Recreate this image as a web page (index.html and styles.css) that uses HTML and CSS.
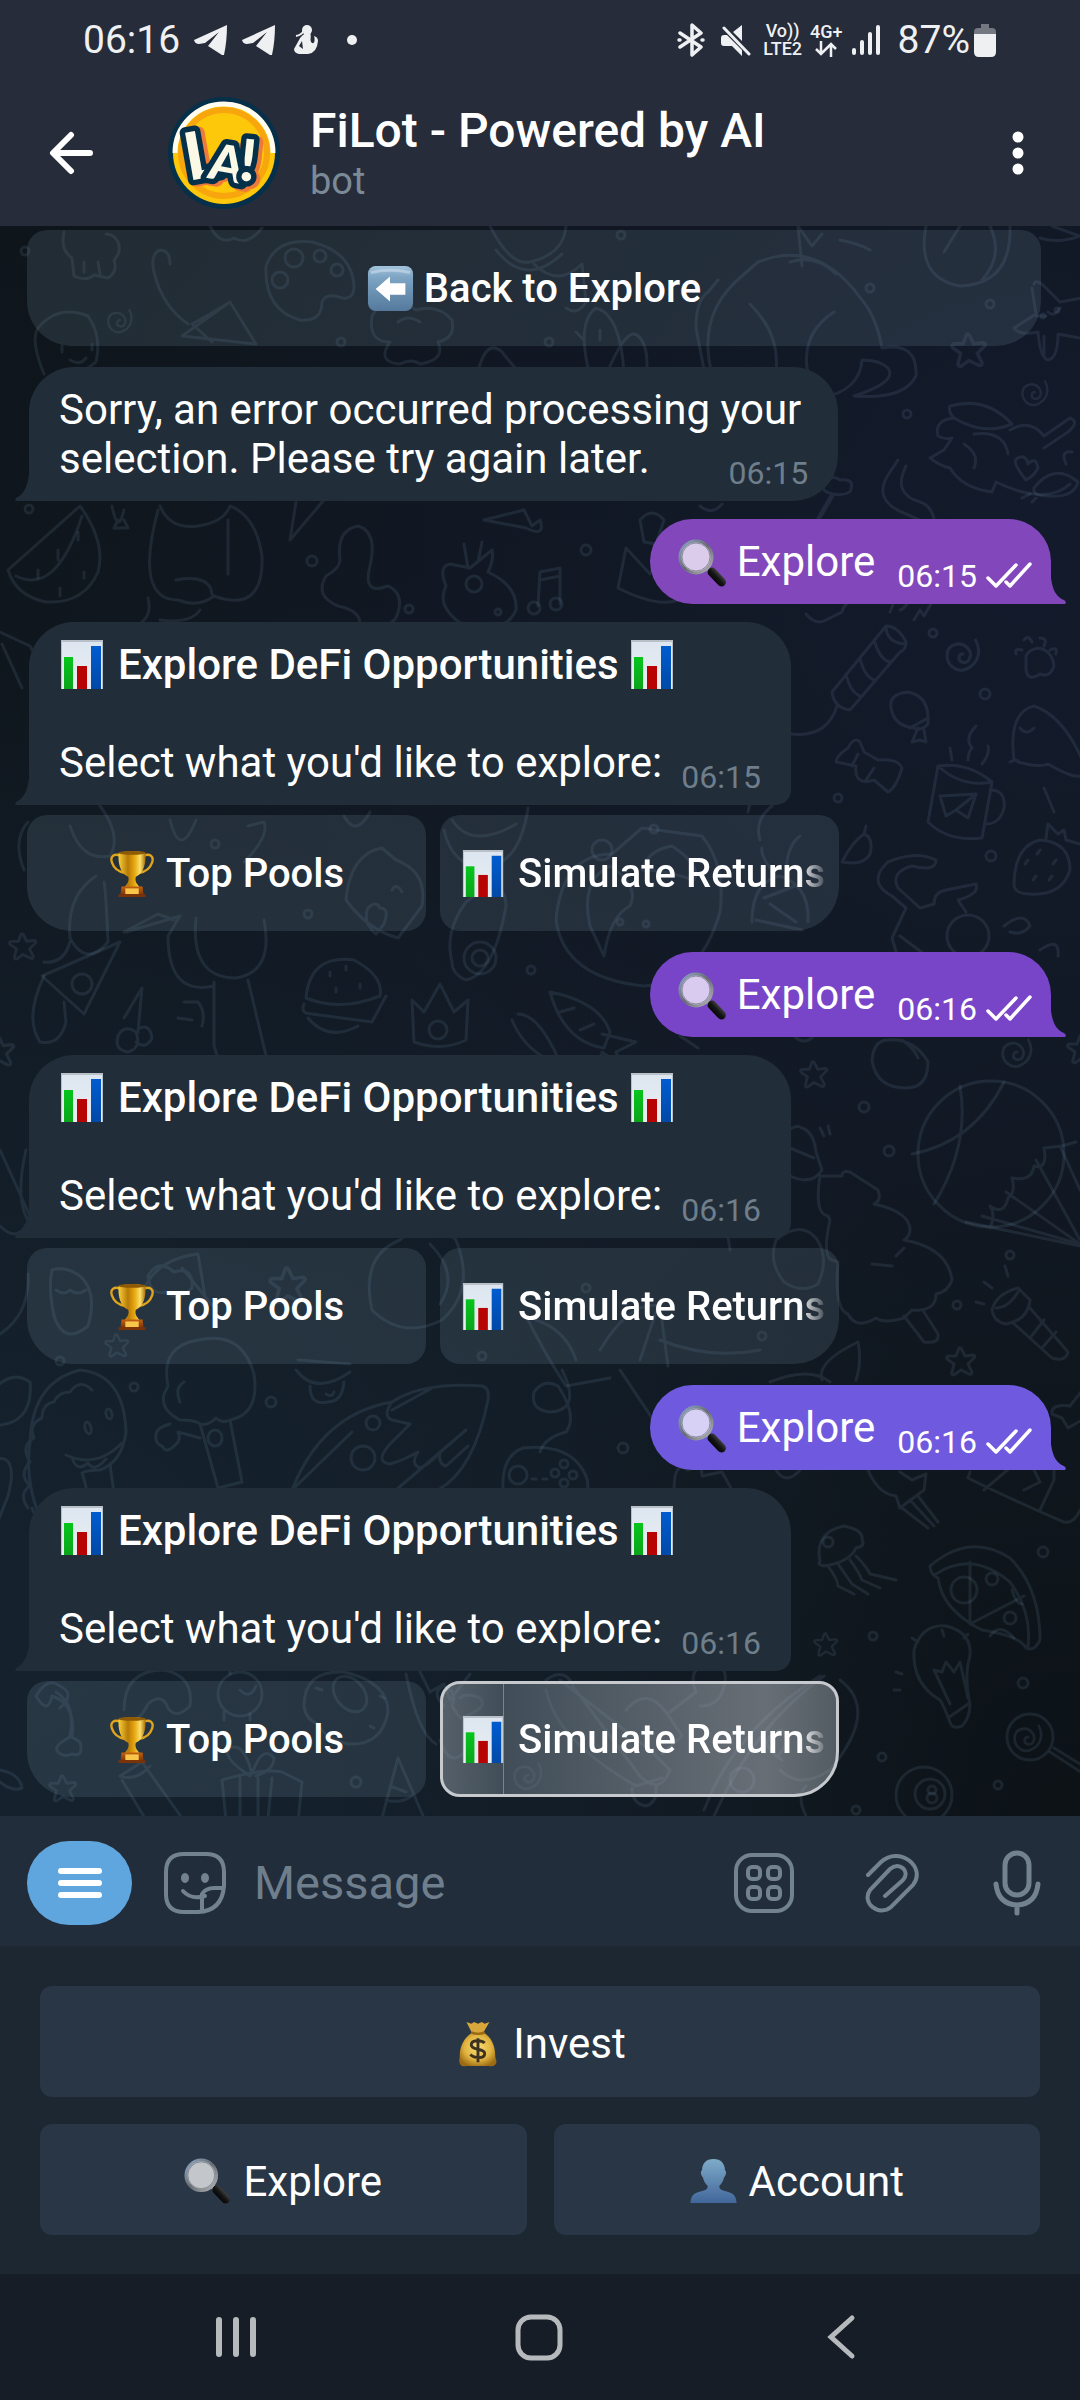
FILE: index.html
```html
<!DOCTYPE html>
<html lang="en">
<head>
<meta charset="utf-8">
<meta name="viewport" content="width=device-width, initial-scale=1">
<title>FiLot - Powered by AI</title>
<link rel="stylesheet" href="styles.css">
</head>
<body>
<svg class="defs" aria-hidden="true">
  <defs>
    <linearGradient id="gold" x1="0" x2="1" y1="0" y2="0"><stop offset="0" stop-color="#f8cf3a"/><stop offset=".35" stop-color="#b87a06"/><stop offset=".6" stop-color="#e8a912"/><stop offset=".8" stop-color="#fbe06a"/><stop offset="1" stop-color="#a76a05"/></linearGradient>
    <linearGradient id="wood" x1="0" x2="0" y1="0" y2="1"><stop offset="0" stop-color="#c4610f"/><stop offset="1" stop-color="#7a3208"/></linearGradient>
    <linearGradient id="paper" x1="0" x2="0" y1="0" y2="1"><stop offset="0" stop-color="#dde6f0"/><stop offset="1" stop-color="#e9edf2"/></linearGradient>
    <linearGradient id="green" x1="0" x2="0" y1="0" y2="1"><stop offset="0" stop-color="#06c51c"/><stop offset="1" stop-color="#0aa51a"/></linearGradient>
    <linearGradient id="blue" x1="0" x2="0" y1="0" y2="1"><stop offset="0" stop-color="#005ccf"/><stop offset="1" stop-color="#0049a8"/></linearGradient>
    <linearGradient id="person" x1="0" x2="0" y1="0" y2="1"><stop offset="0" stop-color="#7fabc9"/><stop offset="1" stop-color="#41669a"/></linearGradient>
    <linearGradient id="key" x1="0" x2="0" y1="0" y2="1"><stop offset="0" stop-color="#a3c3dc"/><stop offset=".25" stop-color="#7ea5c4"/><stop offset="1" stop-color="#54799c"/></linearGradient>
    <linearGradient id="rim" x1="0" x2="1" y1="0" y2="1"><stop offset="0" stop-color="#8fa9c8"/><stop offset=".5" stop-color="#666c72"/><stop offset="1" stop-color="#b5b8bb"/></linearGradient>
    <linearGradient id="grip" x1="0" x2="1" y1="1" y2="0"><stop offset="0" stop-color="#000"/><stop offset=".5" stop-color="#151515"/><stop offset="1" stop-color="#555"/></linearGradient>
    <radialGradient id="sack" cx=".5" cy=".45" r=".6"><stop offset="0" stop-color="#f7dc74"/><stop offset=".6" stop-color="#e2b440"/><stop offset="1" stop-color="#9c6a12"/></radialGradient>
    <symbol id="e-chart" viewBox="0 0 49 49">
      <path fill="#b9c0c8" d="M2 0h42v49H2z"/><path fill="url(#paper)" d="M3 2h40v47H3z"/>
      <path fill="url(#green)" d="M5 17h9v32H5z"/><path fill="#b80303" d="M18 26h10v23H18z"/><path fill="url(#blue)" d="M32 6h10v43H32z"/>
    </symbol>
    <symbol id="e-search" viewBox="0 0 49 49">
      <path d="M29 29l5 5" stroke="#8d9095" stroke-width="5"/>
      <path d="M34 33l9.500 10" stroke="url(#grip)" stroke-width="9" stroke-linecap="round"/>
      <circle cx="18" cy="18" r="16" fill="#fff" fill-opacity=".72"/>
      <circle cx="18" cy="18" r="16" fill="none" stroke="url(#rim)" stroke-width="3"/>
      <circle cx="18" cy="18" r="14" fill="none" stroke="#5d5f66" stroke-opacity=".6"/>
    </symbol>
    <symbol id="e-trophy" viewBox="0 0 49 49">
      <path d="M12 6C5 3 1 7 3 13s7 10 14 11M36 6c7-3 11 1 9 7s-7 10-14 11" fill="none" stroke="#e0a41c" stroke-width="2.500"/>
      <path fill="url(#gold)" d="M10 3q14-4 28 0c1 15-4 22-10 25-1 3 0 5 1 7l3 4H16l3-4c1-2 2-4 1-7C14 25 9 18 10 3z"/>
      <ellipse cx="24" cy="3" rx="14" ry="2" fill="#8f5a05"/>
      <path fill="url(#wood)" d="M13 38h22l1 9H12z"/><path fill="#f7c64a" d="M17 40h14v6H17z"/><path fill="#7a3208" d="M10 46h28v3H10z"/>
    </symbol>
    <symbol id="e-back" viewBox="0 0 49 49">
      <rect x="1" y="1" width="47" height="47" rx="8" fill="url(#key)"/>
      <path d="M4 8q20-5 41 0" stroke="#c9dcea" stroke-opacity=".6" stroke-width="3" fill="none"/>
      <path fill="#fff" d="M9 25l15-13v7h16v12H24v7z"/>
    </symbol>
    <symbol id="e-sack" viewBox="0 0 49 49">
      <path fill="#d9a63b" d="M13 2l5 2 3-2 4 2 4-2 3 2 5-2-7 12H19z"/>
      <path fill="url(#sack)" d="M19 13h12c8 5 12 14 12 24 0 4 2 5 1 8-2 4-6 3-10 3H15c-4 0-8 1-9-3-1-3 0-4 0-8 0-10 5-19 13-24z"/>
      <path d="M18 13q7 3 14 0" stroke="#9a6a14" stroke-width="2.500" fill="none"/>
      <path d="M32 24c-3-3-14-4-14 2s14 3 14 9-11 5-15 1M25 19v25" fill="none" stroke="#3d3221" stroke-width="3"/>
    </symbol>
    <symbol id="e-person" viewBox="0 0 49 49">
      <path fill="url(#person)" d="M24.500 1c8 0 12 5 12 12 2 0 1 6-1 7-1 5-3 7-5 9 0 3 1 4 4 5 8 2 13 3 14 12v1H.500v-1c1-9 6-10 14-12 3-1 4-2 4-5-2-2-4-4-5-9-2-1-3-7-1-7 0-7 4-12 12-12z"/>
    </symbol>
    <symbol id="i-tg" viewBox="0 0 34 30"><path fill="#eef0f2" d="M33 0L0 15q1 4 5 4l6-1 14-11-11 14 14 9h2q3-14 3-30z"/></symbol>
    <symbol id="i-checks" viewBox="0 0 46 26"><path d="M2 16l8 8L30 3M20 20l4 4L44 2" fill="none" stroke="#fff" stroke-width="3.500" stroke-linecap="round" stroke-linejoin="round"/></symbol>
    <symbol id="tail-in" viewBox="0 0 15 38"><path fill="#212d39" d="M15 0C14 20 11 30 1 35q-2 3 1 3h13z"/></symbol>
    <symbol id="tail-out" viewBox="0 0 16 38"><path fill="currentColor" d="M0 0c1 20 4 30 14 34q3 2 1 4H0z"/></symbol>
    <symbol id="d-star" viewBox="0 0 32 32"><path d="M14 2q2-1 3 2l3 6 8-1q3 1 1 3l-6 6 4 8q0 3-3 2l-8-4-7 5q-3 0-2-3l2-8-7-5q-1-3 2-3l7 0z"/></symbol>
    <symbol id="d-spiral" viewBox="0 0 36 36"><path d="M30 4c6 11 2 22-8 27S2 27 3 17 16 5 22 11s2 15-4 14-4-9 0-8"/></symbol>
  </defs>
</svg>

<div class="app">
  <header class="top">
    <div class="status">
      <div class="status-side">
        <span class="clock">06:16</span>
        <svg width="34" height="30"><use href="#i-tg"/></svg>
        <svg width="34" height="30"><use href="#i-tg"/></svg>
        <svg class="mermaid" width="26" height="30" viewBox="0 0 26 30" fill="#eef0f2"><circle cx="14" cy="5" r="5"/><path d="M17 7c2 6-1 8 2 11 3 1 3-4 2-7q4 1 4 5-1 12-10 13H6q-5-1-5-5l5-9c1-3 4-5 8-8z"/><path d="M11 5Q9 10 3 11" stroke="#eef0f2" stroke-width="2" fill="none"/><path d="M6 21l3-5 1 8z" fill="#262c39"/></svg>
        <i class="dot"></i>
      </div>
      <div class="status-side right">
        <svg class="bt" width="28" height="34" viewBox="0 0 28 34" fill="none" stroke="#eef0f2" stroke-width="3.500" stroke-linecap="round" stroke-linejoin="round"><path d="M3 10l21 14-9 8V2l9 8L3 24M2 17h1M25 17h1"/></svg>
        <svg width="30" height="31" viewBox="0 0 30 31"><path fill="#eef0f2" d="M0 13q0-3 3-3h3l15 15v6L11 21H3q-3 0-3-3zM12 7l9-7v16z"/><path d="M3 3l25 26" stroke="#eef0f2" stroke-width="3" stroke-linecap="round"/></svg>
        <span class="net"><b>Vo))</b><b>LTE2</b></span>
        <span class="net"><b>4G+</b><svg width="24" height="16" viewBox="0 0 24 16" fill="none" stroke="#eef0f2" stroke-width="2.500"><path d="M7 0v13M2 8l5 5 5-5M17 16V3M12 8l5-5 5 5"/></svg></span>
        <svg width="30" height="31" viewBox="0 0 30 31" stroke="#eef0f2" stroke-width="4" stroke-linecap="round"><path d="M3 25v3M11 17v11M19 9v19M27 2v26"/></svg>
        <span class="clock battery-text">87%</span>
        <svg width="22" height="34" viewBox="0 0 22 34"><path fill="#737881" d="M7 1h8v4h3q4 0 4 4v4H0V9q0-4 4-4h3z"/><path fill="#eef0f2" d="M0 11h22v18q0 5-5 5H5q-5 0-5-5z"/></svg>
      </div>
    </div>
    <div class="titlebar">
      <button class="icon-btn" aria-label="Back"><svg width="46" height="44" viewBox="0 0 46 44" fill="none" stroke="#fff" stroke-width="6" stroke-linecap="round" stroke-linejoin="round"><path d="M23 4L5 22l18 18M6 22h36"/></svg></button>
      <svg class="avatar" width="112" height="112" viewBox="0 0 112 112">
        <circle cx="56" cy="56" r="56" fill="#05304a"/>
        <circle cx="56" cy="56" r="51" fill="#fdc70a"/>
        <path d="M7 56a49 49 0 0 1 98 0" fill="none" stroke="#fffdf0" stroke-width="5"/>
        <circle cx="56" cy="56" r="43" fill="#fdc70a" stroke="#f8a60e" stroke-width="6"/>
        <g class="logo-shadow"><text x="24" y="84" font-size="66" transform="rotate(-10 30 80)">L</text><text x="43" y="86" font-size="50" transform="rotate(10 58 80)">A</text><text x="74" y="86" font-size="58" transform="rotate(6 80 80)">!</text></g>
        <g class="logo"><text x="20" y="82" font-size="66" transform="rotate(-10 30 80)">L</text><text x="39" y="84" font-size="50" transform="rotate(10 58 80)">A</text><text x="70" y="84" font-size="58" transform="rotate(6 80 80)">!</text></g>
      </svg>
      <div class="who">
        <h1>FiLot - Powered by AI</h1>
        <p>bot</p>
      </div>
      <button class="icon-btn more" aria-label="More options"><svg width="12" height="44" viewBox="0 0 12 44" fill="#fff"><circle cx="6" cy="6" r="5.500"/><circle cx="6" cy="22" r="5.500"/><circle cx="6" cy="38" r="5.500"/></svg></button>
    </div>
  </header>

  <main class="chat">
    <svg class="doodles" viewBox="0 226 1080 1590" preserveAspectRatio="xMidYMin slice" aria-hidden="true">
      <g>
        <use href="#d-star" x="950" y="332" width="38" height="38"/><use href="#d-star" x="945" y="1346" width="32" height="32"/><use href="#d-star" x="799" y="1060" width="30" height="30"/><use href="#d-star" x="813" y="1632" width="26" height="26"/><use href="#d-star" x="1066" y="1034" width="32" height="32"/><use href="#d-star" x="8" y="932" width="30" height="30"/><use href="#d-star" x="48" y="1772" width="30" height="34"/><use href="#d-star" x="268" y="1266" width="40" height="40"/><use href="#d-star" x="104" y="1332" width="26" height="28"/><use href="#d-star" x="-18" y="1034" width="34" height="36"/>
        <use href="#d-spiral" x="1020" y="378" width="30" height="30"/><use href="#d-spiral" x="944" y="636" width="38" height="38"/><use href="#d-spiral" x="1000" y="1036" width="34" height="34"/><use href="#d-spiral" x="106" y="306" width="28" height="30"/><use href="#d-spiral" x="512" y="1758" width="32" height="36"/><use href="#d-spiral" x="1012" y="1722" width="32" height="32"/>
        <circle cx="621" cy="235" r="4"/><circle cx="870" cy="288" r="4"/><circle cx="990" cy="304" r="4"/><circle cx="907" cy="414" r="4"/><circle cx="549" cy="342" r="4"/><circle cx="341" cy="342" r="4"/><circle cx="25" cy="251" r="4"/><circle cx="29" cy="509" r="4"/><circle cx="586" cy="550" r="5"/><circle cx="312" cy="561" r="5"/><circle cx="409" cy="609" r="4"/><circle cx="933" cy="633" r="4"/><circle cx="985" cy="694" r="5"/><circle cx="838" cy="798" r="4"/><circle cx="991" cy="856" r="5"/><circle cx="215" cy="844" r="4"/><circle cx="654" cy="829" r="4"/><circle cx="308" cy="914" r="4"/><circle cx="531" cy="970" r="4"/><circle cx="864" cy="1107" r="5"/><circle cx="889" cy="1151" r="5"/><circle cx="1010" cy="1255" r="4"/><circle cx="957" cy="1305" r="4"/><circle cx="586" cy="1288" r="4"/><circle cx="762" cy="1336" r="4"/><circle cx="60" cy="1361" r="4"/><circle cx="134" cy="1387" r="4"/><circle cx="271" cy="1402" r="5"/><circle cx="623" cy="1448" r="5"/><circle cx="1043" cy="1552" r="5"/><circle cx="873" cy="1636" r="4"/><circle cx="1023" cy="1683" r="5"/><circle cx="882" cy="1757" r="4"/><circle cx="998" cy="1785" r="4"/><circle cx="856" cy="1810" r="4"/><circle cx="356" cy="1782" r="5"/><circle cx="482" cy="1356" r="4"/>
        <path d="M64 232q-4 18 8 26l2 18q12 6 20-1l14 3q10-6 6-18 8-8 4-18-4-8-12-8M84 262v10M98 262l2 12"/>
        <path d="M170 264q0-14-10-14-10 4-6 22 8 34 34 52M230 302l26 42-74-8zM192 324l20 18M230 302q-16 10-38 22"/>
        <path d="M266 266q10-28 46-24 40 10 42 44 0 14-12 12-16-6-20 4 0 20-22 18-36-10-34-54z"/><circle cx="294" cy="258" r="9"/><circle cx="320" cy="256" r="6"/><circle cx="280" cy="280" r="8"/><circle cx="337" cy="270" r="6"/>
        <path d="M210 226q10 20 24 12 14 8 28-10M490 226q20 40 40 36 34-8 36-36M496 250q30 38 66 4M534 264q24 24 48 0l4 38q-8 14-20 6"/>
        <path d="M44 374q-14-34-6-46 20-24 50-12 14 20 8 46l-22 16M70 360q10 6 16-2M62 352v-6M92 350v-6"/>
        <path d="M416 310q-30-20-44 6-4 26 18 26-14 20 10 22 12-6 20 0 26-4 18-22 18-4 14-22-14-16-36-10M398 322q10-8 22 0"/>
        <path d="M590 376q-14-54 6-68 24 6 28 64M610 366q18-40 28-30 12 10 8 44M478 372q8-34 24-20l18 22M584 340l-8-8M600 330v10"/>
        <path d="M712 374q-16-60 30-98l16-14q60-24 104 38 14 16 20 48 36-6 34 28-12 24-62 20 44-14 34-28-8-8-26-8-2 30-40 38M750 304q30 30 26 66M808 374q-8-40 26-62M706 380l-10-52q0-28 12-36l10-12M790 262q26-8 46 12M840 240q20 4 30 10M802 266l-4-40 14 20 10-12"/>
        <path d="M926 226q-10 52 34 60 52-2 50-60M990 226q14 30-8 54M960 226l-16 26M1040 238q20 6 40-2M1052 226l28 10"/>
        <path d="M1034 284q2-6 12 4l14 14 22-4M1032 288l4 26-22 14q6 8 24 4 2 26 10 28 10-2 10-26l22 4M1036 316l10 0M1060 308q-6 10-12 4M1044 336v20"/><circle cx="1043" cy="316" r="2"/><circle cx="1057" cy="310" r="2"/>
        <path d="M950 406q36-10 62 18-28 12-58-6-6-6-4-12zM954 418q-20 2-16 18 8 4 14 2l-8 12-14 8q10 8 20 10 12 20 42 24l4-10q50 24 74 2M974 434q30-4 34 20M964 444q16 10 10 24M1010 430q20-12 34 6l26-18q10 4-2 14l-24 16"/>
        <path d="M1026 480q-16-20-8-22 8-4 10 6 8-8 10 4-4 8-12 12zM1034 488q20-26 44-6-4 16-30 14-16 0-14-8zM1030 494l-8 4M1036 498l-4 4M1066 464q-6-14 6-12"/>
        <path d="M818 518l14-24q-14-4-6-12 6-8 14-2 16-2 10 12-8 4-16 2l-14 24M898 460l-8 12q-20 28 16 42 24 10 24 14M906 466q-14 28 14 36 14 4 16 28"/>
        <path d="M8 570l72-64q26 36 18 66-14 32-52 30-30-6-38-32zM16 576q40 20 66-60"/><path d="M58 550v10M78 532v8M38 570v8M60 588v8M84 572v6"/>
        <path d="M160 506q10 24 38 20 26-4 32-20M158 510q-24 90 20 90 20 8 36-4 50 18 48-40-6-40-32-50M176 580q34-6 36 14M228 520v54"/>
        <path d="M290 540l34-40M296 502l-6 38M112 506q6 30 12 4M118 520l-4 8h14l-4-8"/>
        <path d="M340 560q-4-30 18-34 20 6 12 40-8 30 18 20 18 8 8 32-14 16-38 12 8-18-20-24-24-10-12-30 14-8 14-16z"/>
        <path d="M446 586q-8-20 4-22l20 4 22-18q2 10-4 22 30 14 28 38-10 22-34 14-18 6-30-8-14-14-6-30zM468 568l-4-24M478 562l4-20"/><circle cx="474" cy="584" r="8"/><circle cx="498" cy="612" r="3"/>
        <path d="M538 606l2-34 20-4v36M540 580l20-4"/><circle cx="534" cy="608" r="6"/><circle cx="556" cy="604" r="6"/>
        <path d="M640 520q12-14 24 0l-8 24-12-2zM626 548l-8 40q40 20 60 12M626 548l24 26 20-30M484 520l40-10 8 16 8-6q6 18-14 8zM700 506q12 10 22-2"/>
        <path d="M0 632l30 14 12 22M22 688l-20-44M142 622q10-8 6-24M160 620q30 4 40-10M806 614q10 12 20 6l16-8q2-8 8-10M890 612l4-10M900 610q10-4 6-14"/>
        <path d="M832 692l54-66q12 0 20 16 0 8-6 10l-50 58q-16-2-18-18zM886 626q0 16 18 18M874 640q6 20 16 22M860 658q4 18 14 22M846 674q4 18 14 22M837 706q-10 32-46 28M914 620l6-10 4 6 8-14"/>
        <path d="M892 712q-6-18 16-20 22 4 20 32-8 8-14 4-18-2-22-16zM928 718l-18 10M918 728l-6 14 8-2 6 2-2-12"/>
        <path d="M1026 656q2-6 12-8 14 2 16 18-4 12-14 8-12 8-14-4zM1016 654q-2-6 6-4M1024 640q4-6 8 2M1040 638q8 0 4 8M1050 650q8-4 6 4"/>
        <path d="M1010 762q8-4 8 0 22 6 30 2 24 14 32 12M1014 760q-6-48 20-54 30 10 50 58M1020 728q6 8 14 0"/>
        <path d="M836 762q0-6 12-14 6-12 12-6l4 10 14 8q20-2 24 8-6 20-14 24l-14-12q-20 6-18-14zM858 754l-6 12M874 768l-8 12"/>
        <path d="M938 766l-10 56q20 20 54 16l10-56M938 766q30-4 54 16-30 6-54-16zM990 790q16 0 14 18-4 16-18 16M940 796l36-2-8 24-12-8-10 6zM976 794l-20 16M952 760l-2-12M968 760q0-8 4-12-8-10 4-22M982 764q8-10 6-18"/>
        <path d="M842 862q10-20 22-28 10 4 6 20-6 12-28 8zM864 834l2-8M1014 886q0-40 26-46 30 2 30 30-8 26-40 24-14 0-16-8zM1046 838l2-14 10 10 6-4 2 10 14 4"/><path d="M1028 860l-3 4M1040 850l-3 4M1056 860l-3 4M1036 876l-3 4M1052 876l-3 4"/>
        <path d="M936 860q-20-10-48 2-22 20 4 34l14 12-14 30 6 20M936 860q0 12-24 6-22 6-14 22l22 20 14-4q0-12 12-14l30-6q4 10-18 16l8 12"/><circle cx="968" cy="936" r="21"/><path d="M1004 926q20-16 26 0-8 10-20 6M900 936l24 18M1040 950q20-14 18 6"/>
        <path d="M760 840q-6-20 12-34M748 812q2-16 14-26M1054 812l-10-24M24 870q-12-30 4-48M70 826q12 36 40 30 12-20-10-50M170 820q10 40 26 0M344 816q12 22 26-4M96 876q-30 20-26 62 16 30 38 4-2-50-4-60M244 862q26-26 20-40l-16 4"/>
        <path d="M444 830q8 36 40 38 36-4 44-60M452 820q20 30 64 4M346 900q4-46 36-52l14 12q32 12 26 46l-24 32q-30-8-52-38zM368 908q8-8 12 0 10 0 4 16l-8 10q-14-12-8-26zM392 890q4-8 10 2"/><circle cx="602" cy="850" r="10"/>
        <path d="M126 932l54-16-12 20q0 60 46 50M196 918q-6 60 40 60 38-6 28-58M174 920l-16-6-34 18M214 982v64l12 36M248 980l20 84M184 1002h14q8 10 4 24M178 1018l14 2"/>
        <path d="M42 976l78-34-36 72zM44 962q20 2 26-20"/><circle cx="82" cy="984" r="10"/><path d="M44 976q-20 42-4 66 20 4 26-20l-2-20"/>
        <path d="M124 1018q12-20 18-30M142 988l-4 44M118 1036q6-12 18-4 6 16-8 20-14-2-10-16zM140 1028q10-4 12 10-6 12-16 4"/>
        <path d="M306 998q4-44 48-38 30 16 26 36-40 16-74 2zM304 1004q-4 10 8 10l60 8 14-26M308 1018q20 24 50 8"/><path d="M330 972v4M346 966v4M360 984v4M336 988v4"/>
        <path d="M412 1000l12 12 16-28 14 28 14-12-2 40q-24 12-52 2z"/><circle cx="438" cy="1030" r="9"/>
        <path d="M452 962q-8-30 14-60l24-18q16 4 16 22-12 68-40 74-14-6-14-18z"/><circle cx="480" cy="958" r="16"/><circle cx="480" cy="958" r="8"/>
        <path d="M550 992q50 10 60 40l-6 16q-40-6-54-56zM560 1012l14-4M580 1030l14-6M602 1034l34 8-20 10 8 16-22-16-2 16M512 1020q10 24 30 36M518 1014q20 0 40 44"/>
        <path d="M556 920q6-66 56-66l30-26 60 8q24 30 18 76-20 70-76 74-80-8-88-66zM590 926q-10-46 20-60 30 20 20 40-20 10-26 50zM642 870q6-20 30-24 30 20 22 34-30-10-52-10z"/><circle cx="620" cy="922" r="3"/><circle cx="646" cy="924" r="3"/>
        <path d="M752 922q0-40 28-46 30 10 28 46M756 920l46 10M776 876q-16-20-14-28M786 876q0-30 14-40M764 898l36-14M770 904l26 18M680 1036l18 12M794 1036q10 10 20 0"/>
        <path d="M872 1060q2-20 16-20 26-2 40 22 0 26-22 26-30 0-34-28zM902 1040q12 8 16 18"/>
        <path d="M788 1130q10-6 14-2 12 4 14 24l6 18q-10 16-32 6M790 1148l24 10M820 1128l4 8M828 1126l2 8"/>
        <path d="M842 1176q0-6 8-4l28 18q4 10-4 14 36 8 36 26 0 6-6 10 44 8 48 40-4 12-16 14 0 18-24 16l-8 8q-20 6-28 0-20 12-28-4-14-4-10-52l-6-2q-10-4-2-40l-2-4q-14-2-8-40zM904 1316l20 26q16 2 14-8l-14-22M872 1264l20 2M896 1256l8-8"/>
        <ellipse cx="991" cy="1154" rx="73" ry="73"/><path d="M960 1086q10 60-26 118M1004 1082q-30 60-92 72M966 1222l114 24M990 1228q6-14 0-22 14 10 18-8 8-6 4-20 20 4 22-12 14 4 10-18l18-2 14-4M1006 1192l74 52M1036 1160l44 80M1060 1146l20 44M982 1216l98 28"/>
        <path d="M992 1310q4-16 26-22l12 12q-2 20-24 24-12-2-14-14zM996 1308q12 0 22-16M1012 1322l40 36q14 4 16-6l-38-44M1042 1348l14-16M1030 1338l14-18M1008 1276l-3-10M992 1288l-8-6M984 1304l-8-2"/>
        <path d="M36 1230q-24-20-10-80M0 1150l30 66q-10 30-30 10M52 1270q14-4 28 6 18 16 8 50-24 20-34-10-6-30-2-46zM56 1290q8 6 14 0 8 6 16 0M140 1300q10-40 58-46l10 60M148 1276q10-18 26-4 20-6 18 16-14 14-26 4-16 4-18-16zM216 1310l-34-42"/>
        <path d="M372 1204q0-20 14-20 14 6 6 22M376 1226q6-24 24-20 12 18-4 24M400 1240q30-30 56 0 20 50-14 80-40 20-70-10-12-54 28-70zM430 1244q30 30 10 60M534 1200q14 24 30 4l10 20 14-4M700 1200l12-22 16-2q10 40-12 56-10-14-16-32zM724 1210l6 40M776 1240q24-20 40-2 14 20 2 46-16 10-34-2-16-20-8-42zM780 1236l6-10"/>
        <path d="M526 1316q20 40 40 70l44-8M536 1320q30 10 40 40M600 1350q30-50 60-44l8 60M660 1340q50 20 100 10M822 1380q-6-18 36-38 4 20-2 38M770 1382q40-16 60 0M660 1300l-20 60"/>
        <path d="M-10 1426q44 0 40-44-20-14-40 12M-10 1460q30-10 18 36l-16 40M0 1334q30-20 28-60"/>
        <path d="M44 1526q-20-40-14-84 2-60 50-72 44 4 46 62-4 30-26 38-12 0-18 3 10 30 4 42M66 1455q30 14 56-12M72 1457q4 16 16 6 6 10 18-4M110 1464l4 30q22-12 20 12l-6 14M40 1528l-8-20M28 1508q-10-14 2-22-12-12 0-24-10-16 4-24-6-14 8-20 0-14 12-16 4-10 16-10 10-14 22-2"/><ellipse cx="88" cy="1428" rx="3" ry="6" transform="rotate(-14 88 1428)"/><ellipse cx="109" cy="1414" rx="3" ry="5" transform="rotate(-14 109 1414)"/>
        <path d="M200 1424q-4-4-20-4-20-10-16-26l4-8q-8-40 30-46 44-10 56 34 6 40-24 46-8 4-14-2-8 8-16 6zM180 1402q-6-14 4-20M170 1424q-16 4-14 14 0 6 6 8 4 8 12 0 8-6 4-14l22 6M200 1424l18 64 24-6-12-62"/><ellipse cx="215" cy="1438" rx="7" ry="8"/>
        <path d="M296 1370q20 26 54 2M298 1360l52 4M310 1386q0 20 18 16 14 0 16-20M326 1394q6 4 8-2"/>
        <path d="M292 1490q30-76 100-88 30-20 90-16 8 2 6 14-14 70-50 90M292 1490l60-58M392 1402q-10 14 0 18l18 4-20 20q-16 18 0 20 14-4 28-12-8 12 2 16 10-4 20-16-2 12 6 14l22-20M396 1490l70-60M392 1410l40-22"/><circle cx="373" cy="1423" r="7"/><circle cx="363" cy="1458" r="12"/>
        <path d="M562 1370q20 40-12 42-20-2-16-20 10-14 24-6 20 30 8 46-22 6-26 20"/><path d="M503 1490q-2-34 20-42 36-4 54 14 14 16 10 30"/><circle cx="518" cy="1475" r="9"/><circle cx="564" cy="1464" r="4"/><circle cx="555" cy="1473" r="4"/><circle cx="573" cy="1475" r="4"/><circle cx="564" cy="1483" r="4"/><path d="M532 1479h4M543 1479h4M620 1370l40 60"/>
        <path d="M1052 1412q0-8 18-6l14-18M1052 1414l10 4 6 10 14-8M674 1490q0-30 14-20 14-10 14 6l20-4 10 18M776 1470q10 16 24 0"/>
        <path d="M868 1470q10 24 28 26l4 12 24-18 2-16-14 6-12-8M910 1500l24 26M918 1496l20 26M902 1508l26 20M970 1472l-2 6q40 20 96 44 10 2 16-12M984 1490l28-24M1024 1490l16-8-6-12M1040 1510l14-30v-14"/>
        <path d="M820 1562q-6-30 24-36 20 4 18 14 4 6-6 8-6 14-32 18-8-2-4-4zM828 1566q10 14 10 20l16 8M838 1564l14 20 16 10M850 1560q10 14 12 20l18 8M856 1556q10 10 14 18l26 6"/><circle cx="828" cy="1542" r="5"/>
        <path d="M930 1566q40-34 80-8 30 30 30 82-6 12-14 8-6-12-44-18-40-20-44-52-8-4-8-12zM936 1574q36-24 74 8 22 30 18 64M970 1562v62l54-28"/><circle cx="964" cy="1590" r="13"/><circle cx="992" cy="1579" r="6"/><circle cx="1010" cy="1618" r="6"/><path d="M990 1636q10-14 24 2M1012 1590q4 14 10 14"/>
        <path d="M950 1722q-6-16-10-22-28-16-26-50 8-26 32-24 26 6 24 30-6 20 0 48 0 14-8 22-10 4-12-4zM948 1718l20-14M950 1704l-16-34 8 2 4-10 8 10 6-10 8 36M918 1642l-6-4M944 1636l-2-6M964 1638l4-4M902 1674l-6-2M900 1690h-6"/>
        <circle cx="1030" cy="1737" r="23"/><path d="M1050 1752l40 26M1054 1748l36 22"/><circle cx="924" cy="1795" r="28"/><circle cx="930" cy="1794" r="15"/><circle cx="932" cy="1790" r="4"/><circle cx="932" cy="1798" r="5"/>
        <path d="M60 1708q16-14 0-22-12-10-24 10 12 20 16 0 24 8 20 40-20 10-14 16 6 6 14 2 12 4 8-12l-10-6q6-32-14-44M0 1770q20 4 22 18-10 4-22-6"/>
        <path d="M124 1710q0-40 40-40 30 6 26 36-14 14-22 2-6-16-20-4-10 20-20 16"/><circle cx="240" cy="1694" r="22"/><path d="M224 1712v8M250 1714v6M230 1674v-8M240 1690q10 10 16-4"/>
        <path d="M304 1706q0-36 40-34 44 10 44 40-6 34-40 32-24-6-30-20-12-4-14-18z"/><ellipse cx="350" cy="1694" rx="14" ry="20" transform="rotate(-40 350 1694)"/><path d="M380 1696l4 2M370 1726l4 2M322 1690l-6-2"/>
        <path d="M120 1776l22-14 40 56M122 1780l24 40M120 1776q16 6 30-10M222 1780q40-12 60-8l20 10-4 40M222 1780l4 40M240 1778v40M258 1778v40M272 1778l-4 40M250 1776q-30-20-20-28 14-6 22 26 10-30 22-16 0 12-18 18M382 1818l16-60 26 60M386 1800q14 4 26-4M390 1786l16 6"/>
        <path d="M406 1674q12 60 30 70M420 1672l10 20 14-8 6 16 20-26M444 1706q-14-14 0-20 14 6 8 20l8 12q30-10 20-20-14-6-20 0M440 1740q10 30 26 10"/>
        <path d="M546 1680q20-14 28 8l66 88q20 20 30-6l-20-20-90-70M546 1690q10 50 90 96l26-8M626 1710q20-24 40 2l16 24-20 18M670 1712l26-20q-10-24 14-30 20 4 14 24-4 20-24 20M632 1788q0 16 14 18 12-4 10-20"/>
        <path d="M714 1816q40-90 110-140M704 1810q30-80 116-134M782 1760q-30-20 0-30 10 10-4 26M840 1680q40 30-10 90-30 20-50 0M806 1816q-10-20 0-30"/><circle cx="742" cy="1780" r="12"/>
      </g>
    </svg>

    <div class="inline-kb wide"><button><svg class="em"><use href="#e-back"/></svg>Back to Explore</button></div>

    <article class="bubble in last">
      <p class="full">Sorry, an error occurred processing your</p>
      <div class="row spread"><p>selection. Please try again later.</p><time>06:15</time></div>
      <svg class="tail"><use href="#tail-in"/></svg>
    </article>

    <article class="bubble out c1"><svg class="em"><use href="#e-search"/></svg><p>Explore</p><time>06:15</time><svg class="checks"><use href="#i-checks"/></svg><svg class="tail"><use href="#tail-out"/></svg></article>

    <article class="bubble in">
      <h2><svg class="em"><use href="#e-chart"/></svg>Explore DeFi Opportunities<svg class="em"><use href="#e-chart"/></svg></h2>
      <div class="row"><p>Select what you'd like to explore:</p><time>06:15</time></div>
      <svg class="tail"><use href="#tail-in"/></svg>
    </article>
    <div class="inline-kb"><button><svg class="em"><use href="#e-trophy"/></svg>Top Pools</button><button class="clip"><svg class="em"><use href="#e-chart"/></svg><span>Simulate Returns</span></button></div>

    <article class="bubble out c2"><svg class="em"><use href="#e-search"/></svg><p>Explore</p><time>06:16</time><svg class="checks"><use href="#i-checks"/></svg><svg class="tail"><use href="#tail-out"/></svg></article>

    <article class="bubble in">
      <h2><svg class="em"><use href="#e-chart"/></svg>Explore DeFi Opportunities<svg class="em"><use href="#e-chart"/></svg></h2>
      <div class="row"><p>Select what you'd like to explore:</p><time>06:16</time></div>
      <svg class="tail"><use href="#tail-in"/></svg>
    </article>
    <div class="inline-kb"><button><svg class="em"><use href="#e-trophy"/></svg>Top Pools</button><button class="clip"><svg class="em"><use href="#e-chart"/></svg><span>Simulate Returns</span></button></div>

    <article class="bubble out c3"><svg class="em"><use href="#e-search"/></svg><p>Explore</p><time>06:16</time><svg class="checks"><use href="#i-checks"/></svg><svg class="tail"><use href="#tail-out"/></svg></article>

    <article class="bubble in">
      <h2><svg class="em"><use href="#e-chart"/></svg>Explore DeFi Opportunities<svg class="em"><use href="#e-chart"/></svg></h2>
      <div class="row"><p>Select what you'd like to explore:</p><time>06:16</time></div>
      <svg class="tail"><use href="#tail-in"/></svg>
    </article>
    <div class="inline-kb"><button><svg class="em"><use href="#e-trophy"/></svg>Top Pools</button><button class="clip loading"><svg class="em"><use href="#e-chart"/></svg><span>Simulate Returns</span></button></div>
  </main>

  <form class="composer">
    <button type="button" class="menu" aria-label="Menu"><svg width="44" height="32" viewBox="0 0 44 32" stroke="#fff" stroke-width="6" stroke-linecap="round"><path d="M3 4h38M3 16h38M3 28h38"/></svg></button>
    <button type="button" class="icon-btn" aria-label="Stickers"><svg width="62" height="64" viewBox="0 0 62 64" fill="none" stroke="#73828f" stroke-width="4" stroke-linecap="round"><path d="M20 3h22q18 0 18 18v14Q58 60 34 61H20Q2 61 2 43V21Q2 3 20 3zM59 37H50q-8 0-12 6v17M19 40q8 9 22 5"/><ellipse cx="21" cy="27" rx="2" ry="3" fill="#73828f"/><ellipse cx="41" cy="27" rx="2" ry="3" fill="#73828f"/></svg></button>
    <input type="text" placeholder="Message" aria-label="Message">
    <button type="button" class="icon-btn" aria-label="Bot keyboard"><svg width="60" height="60" viewBox="0 0 60 60" fill="none" stroke="#73828f" stroke-width="4"><rect x="2" y="2" width="56" height="56" rx="16"/><rect x="14" y="14" width="12" height="12" rx="4"/><rect x="34" y="14" width="12" height="12" rx="4"/><rect x="14" y="34" width="12" height="12" rx="4"/><rect x="34" y="34" width="12" height="12" rx="4"/></svg></button>
    <button type="button" class="icon-btn attach" aria-label="Attach"><svg width="54" height="60" viewBox="0 0 54 60" fill="none" stroke="#73828f" stroke-width="4" stroke-linecap="round"><path d="M3 22L16 9C34-8 62 14 48 32L26 54C14 64-4 50 5 37L25 16C34 8 46 18 38 27L20 43"/></svg></button>
    <button type="button" class="icon-btn mic" aria-label="Voice message"><svg width="48" height="66" viewBox="0 0 48 66" fill="none" stroke="#73828f" stroke-width="5" stroke-linecap="round"><rect x="12" y="3" width="24" height="42" rx="12"/><path d="M3 34q2 20 21 21 19-1 21-21M24 56v7"/></svg></button>
  </form>

  <section class="reply-kb">
    <button class="span"><svg class="em"><use href="#e-sack"/></svg>Invest</button>
    <button><svg class="em"><use href="#e-search"/></svg>Explore</button>
    <button><svg class="em"><use href="#e-person"/></svg>Account</button>
  </section>

  <nav class="system">
    <button aria-label="Recents"><svg width="48" height="48" viewBox="0 0 48 48" stroke="#b7babd" stroke-width="6" stroke-linecap="round"><path d="M7 7v34M24 7v34M41 7v34"/></svg></button>
    <button aria-label="Home"><svg width="48" height="48" viewBox="0 0 48 48" fill="none" stroke="#b7babd" stroke-width="5"><rect x="3" y="4" width="42" height="41" rx="13"/></svg></button>
    <button aria-label="Back"><svg width="48" height="48" viewBox="0 0 48 48" fill="none" stroke="#b7babd" stroke-width="5" stroke-linecap="round"><path d="M34 5L13 24l21 19"/></svg></button>
  </nav>
</div>
</body>
</html>
```
FILE: styles.css
```css
* { box-sizing: border-box; }
body { margin: 0; background: #161d26; color: #fff; font-family: Roboto, "Noto Sans", sans-serif; }
h1, h2, p { margin: 0; font-weight: 400; }
button { border: 0; padding: 0; background: none; color: inherit; font: inherit; display: flex; align-items: center; justify-content: center; }
svg { display: block; flex: none; }
.defs { position: absolute; width: 0; height: 0; }
.app { display: flex; flex-direction: column; min-height: 100vh; }
.em { width: 49px; height: 49px; }

/* status bar and title */
.top { background: #262c39; }
.status { height: 80px; padding: 0 84px 0 83px; display: flex; justify-content: space-between; align-items: center; color: #eef0f2; }
.status-side { display: flex; align-items: center; gap: 14px; }
.status-side.right { gap: 12px; }
.clock { font-size: 39px; line-height: 48px; }
.bt { margin-right: 4px; }
.battery-text { margin: 0 -8px 0 5px; }
.mermaid { margin-left: 3px; }
.dot { width: 10px; height: 10px; margin-left: 14px; border-radius: 50%; background: #eef0f2; }
.net { display: flex; flex-direction: column; align-items: center; margin-right: -4px; }
.net b { font-size: 18px; line-height: 18px; font-weight: 500; }
.titlebar { height: 146px; padding: 0 56px 0 48px; display: flex; align-items: center; }
.avatar { margin: 0 30px 0 74px; }
.logo text, .logo-shadow text { font-family: Lato, sans-serif; font-weight: 900; paint-order: stroke; stroke-width: 11px; stroke-linejoin: round; }
.logo text { fill: #fbf8e6; stroke: #05304a; }
.logo-shadow text { fill: #ee7a3a; stroke: #ee7a3a; }
.who { flex: 1; }
.who h1 { font-size: 48px; line-height: 56px; font-weight: 500; }
.who p { font-size: 38px; line-height: 44px; color: #7b8a97; }

/* conversation */
.chat { position: relative; flex: 1; overflow: hidden; padding: 4px 14px 19px; display: flex; flex-direction: column; align-items: flex-start;
  background: radial-gradient(circle at 0 90%, #15222e 0, transparent 55%), radial-gradient(circle at 100% 100%, #0c1216 0, transparent 40%), radial-gradient(circle at 95% 20%, #131a2b 0, transparent 60%), linear-gradient(#0e151b, #131c27); }
.doodles { position: absolute; inset: 0; width: 100%; height: 100%; }
.doodles g { fill: none; stroke: #8eb0d0; stroke-opacity: .12; stroke-width: 3; stroke-linecap: round; stroke-linejoin: round; }
.bubble { position: relative; font-size: 42px; line-height: 49px; padding: 18px 30px 8px; }
.bubble .tail { position: absolute; bottom: 0; width: 15px; height: 38px; }
.bubble time { font-size: 32px; line-height: 40px; color: #6f7e8b; }
.in { margin: 18px 0 0 15px; background: #212d39; border-radius: 45px 45px 15px 0; }
.in.last { margin-top: 21px; border-radius: 45px 45px 45px 0; }
.in .tail { left: -14px; }
.in .full { padding-right: 7px; }
.in h2 { display: flex; align-items: center; gap: 10px; font-size: inherit; font-weight: 500; margin-bottom: 49px; }
.row { display: flex; align-items: flex-end; gap: 19px; }
.row p { margin-bottom: 10px; }
.spread { justify-content: space-between; }
.out { align-self: flex-end; margin: 21px 15px 0 0; padding: 18px 19px 8px 28px; display: flex; align-items: flex-end; border-radius: 43px 43px 0 43px; }
.out.c1 { margin-top: 18px; background: #8248bb; color: #8248bb; }
.out.c2 { background: #7845c8; color: #7845c8; }
.out.c3 { background: #6f5adf; color: #6f5adf; }
.out p { color: #fff; margin: 0 22px 10px 10px; }
.out .em { margin-bottom: 8px; }
.out time { color: #fff; }
.out .checks { width: 46px; height: 26px; margin: 0 0 8px 9px; }
.out .tail { right: -15px; width: 16px; }
.inline-kb { position: relative; width: 812px; max-width: 100%; margin: 10px 0 0 13px; display: grid; grid-template-columns: 1fr 1fr; gap: 14px; }
.inline-kb.wide { width: auto; align-self: stretch; margin: 0 25px 0 13px; grid-template-columns: 1fr; }
.inline-kb button { height: 116px; gap: 10px; border-radius: 20px 20px 20px 45px; background: rgb(132 160 178 / 17%); font-size: 40px; font-weight: 500; white-space: nowrap; }
.inline-kb .em { width: 47px; height: 47px; }
.inline-kb.wide button { border-radius: 20px 20px 45px 45px; }
.inline-kb .clip { justify-content: flex-start; padding: 0 0 0 21px; border-radius: 20px 20px 45px 20px; }
.clip span { -webkit-mask-image: linear-gradient(to left, rgb(0 0 0 / 15%), #000 26px); mask-image: linear-gradient(to left, rgb(0 0 0 / 15%), #000 26px); }
.inline-kb .loading { border: 3px solid #c6cace; padding: 0 0 0 18px;
  background: linear-gradient(90deg, rgb(150 160 168 / 50%), rgb(110 125 135 / 50%) 60px, rgb(255 255 255 / 45%) 60px, rgb(255 255 255 / 45%) 61px, rgb(110 125 135 / 50%) 61px, rgb(190 195 203 / 50%) 82%, rgb(150 160 168 / 50%)); }

/* message field */
.composer { height: 130px; padding: 3px 39px 0 27px; display: flex; align-items: center; background: #212d3a; }
.menu { width: 105px; height: 84px; margin-right: 32px; border-radius: 42px; background: #5fa6de; }
.composer input { flex: 1; min-width: 0; margin-left: 28px; border: 0; padding: 0; outline: 0; background: none; color: #fff; font: 47px/56px Roboto, "Noto Sans", sans-serif; }
.composer input::placeholder { color: #6f7e8c; opacity: 1; }
.attach { margin: 0 74px 0 71px; }

/* reply keyboard */
.reply-kb { padding: 40px 40px 39px; display: grid; grid-template-columns: 1fr 1fr; gap: 27px; background: #1d2732; }
.reply-kb button { height: 111px; padding-top: 3px; gap: 12px; border-radius: 12px; background: #293645; font-size: 42px; }
.reply-kb .span { grid-column: 1 / -1; }
.reply-kb .em { width: 47px; height: 47px; }

.system { height: 126px; padding: 0 87px 0 84px; display: grid; grid-template-columns: repeat(3, 1fr); background: #161d26; }
```
